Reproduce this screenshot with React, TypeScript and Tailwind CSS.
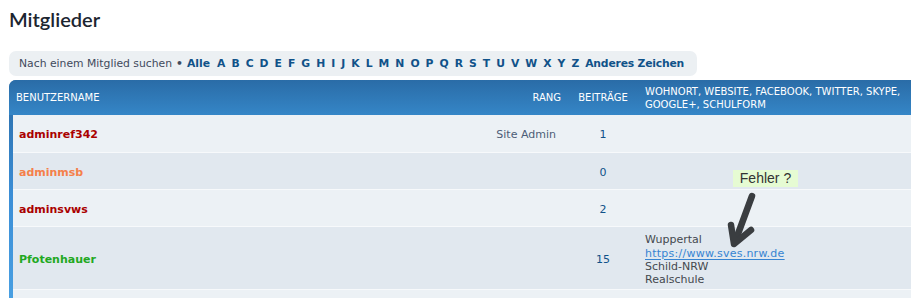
import React from 'react';

const letters = 'A B C D E F G H I J K L M N O P Q R S T U V W X Y Z'.split(' ');

interface Member {
  name: string;
  color: string;
  rank: string;
  posts: string;
  height: string;
  info?: boolean;
}

const members: Member[] = [
  { name: 'adminref342', color: 'text-[#aa0000]', rank: 'Site Admin', posts: '1', height: 'h-[38px]' },
  { name: 'adminmsb', color: 'text-[#f5804a]', rank: '', posts: '0', height: 'h-[37px]' },
  { name: 'adminsvws', color: 'text-[#aa0000]', rank: '', posts: '2', height: 'h-[37px]' },
  { name: 'Pfotenhauer', color: 'text-[#22a822]', rank: '', posts: '15', height: 'h-[63px]', info: true },
];

const App: React.FC = () => {
  return (
    <div className="relative w-[911px] h-[298px] overflow-hidden bg-white font-['DejaVu_Sans',Verdana,sans-serif] text-[11px]">
      <div className="pl-[9px] pt-[6px]">
        <h2 className="font-['Lato',sans-serif] text-[20px] leading-[26px] text-[#1c2530] font-semibold">Mitglieder</h2>

        <div className="mt-[19px] w-[688px] h-[25px] rounded-[7px] bg-[#ecf0f3] flex items-center pl-[10px] pt-[2px] text-[10.8px] text-[#3f4a5c] whitespace-nowrap">
          <span>Nach einem Mitglied suchen</span>
          <span className="font-bold mx-[4px]">•</span>
          <span className="font-bold text-[#105289] mr-[7px]">Alle</span>
          {letters.map((l) => (
            <span key={l} className="font-bold text-[#105289] mr-[6px]">{l}</span>
          ))}
          <span className="font-bold text-[#105289] tracking-[-0.2px]">Anderes Zeichen</span>
        </div>

        <div className="mt-[4px] w-[920px] rounded-tl-[7px] bg-gradient-to-b from-[#2a6ba6] via-[#3b8ed6] to-[#4aa1e3] pl-[4px]">
          <div className="h-[35px] flex items-center text-white text-[10px] leading-[13px] bg-gradient-to-b from-[#2a6ca7] to-[#3586c7] -ml-[4px] rounded-tl-[7px]">
            <div className="flex-1 pl-[7px]">BENUTZERNAME</div>
            <div className="w-[200px] text-right pr-[5px]">RANG</div>
            <div className="w-[74px] text-center">BEITRÄGE</div>
            <div className="w-[289px] pl-[5px]">WOHNORT, WEBSITE, FACEBOOK, TWITTER, SKYPE, GOOGLE+, SCHULFORM</div>
          </div>
          {members.map((m, i) => (
            <div
              key={m.name}
              className={`flex items-center pt-[4px] border-b border-[#f7f9fb] ${i % 2 === 0 ? 'bg-[#ecf1f5]' : 'bg-[#e1e8ef]'} ${m.height}`}
            >
              <div className={`flex-1 pl-[6px] font-bold ${m.color}`}>{m.name}</div>
              <div className="w-[200px] text-right pr-[10px] text-[#4c5d77]">{m.rank}</div>
              <div className="w-[74px] text-center text-[#105289]">{m.posts}</div>
              <div className="w-[289px] pl-[5px] text-[#44484e] leading-[13.4px]">
                {m.info && (
                  <>
                    <div>Wuppertal</div>
                    <div className="text-[#3684d2] underline underline-offset-2 tracking-[0.25px]">https://www.sves.nrw.de</div>
                    <div>Schild-NRW</div>
                    <div>Realschule</div>
                  </>
                )}
              </div>
            </div>
          ))}
          <div className="h-[20px] bg-[#ecf1f5]" />
        </div>
      </div>

      <div className="absolute left-[733px] top-[170px] w-[65px] h-[17px] bg-[#e6fbd3] flex items-center justify-center font-['Liberation_Sans',Arial,sans-serif] text-[14px] text-[#333]">
        Fehler ?
      </div>
      <svg className="absolute left-[720px] top-[188px]" width="45" height="65" viewBox="720 188 45 65">
        <path d="M752 196 L735 242" stroke="#3a3d40" strokeWidth="6.5" strokeLinecap="round" fill="none" />
        <path d="M731 225 L734 244 L751 230" stroke="#3a3d40" strokeWidth="6.5" strokeLinecap="round" strokeLinejoin="round" fill="none" />
      </svg>
    </div>
  );
};

export default App;
